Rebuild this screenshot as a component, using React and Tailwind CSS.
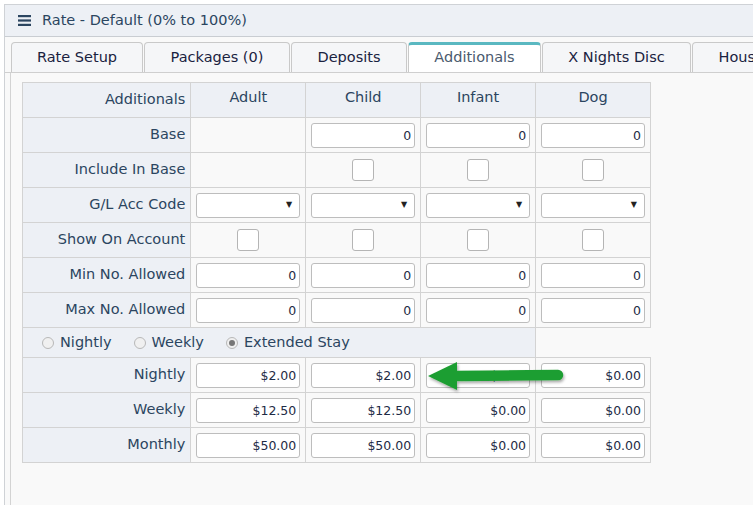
import React from 'react';

const font = { fontFamily: '"DejaVu Sans", Verdana, sans-serif' };

const tabs = [
    { label: 'Rate Setup', w: 'w-[132px]' },
    { label: 'Packages (0)', w: 'w-[146px]' },
    { label: 'Deposits', w: 'w-[116px]' },
    { label: 'Additionals', w: 'w-[133px]', active: true },
    { label: 'X Nights Disc', w: 'w-[149px]' },
    { label: 'Housekeeping', w: 'w-[156px]' },
];

const cols = ['Adult', 'Child', 'Infant', 'Dog'];

const NumBox = ({ value }) => (
    <div className="mx-auto h-[25px] w-[104px] rounded-[3px] border border-[#bdbdbd] bg-white pr-[3px] text-right text-[12.5px] leading-[23px] text-[#1d2b45]">
        {value}
    </div>
);

const SelectBox = () => (
    <div className="mx-auto flex h-[25px] w-[104px] items-center justify-end rounded-[3px] border border-[#bdbdbd] bg-white pr-[7px] text-[8px] text-[#222]">
        ▼
    </div>
);

const Check = () => (
    <div className="mx-auto h-[22px] w-[22px] rounded-[3px] border border-[#b5b5b5] bg-white" />
);

const Radio = ({ checked, label }) => (
    <span className="flex items-center gap-[6px]">
        <span className="flex h-[12px] w-[12px] items-center justify-center rounded-full border border-[#b8b8b8] bg-[#f0f0f0]">
            {checked && <span className="h-[6px] w-[6px] rounded-full bg-[#777]" />}
        </span>
        {label}
    </span>
);

const labelCell = 'h-[35px] border border-[#d3d3d3] bg-[#edf0f5] pr-[5px] text-right text-[14.5px] font-normal text-[#2b4560]';
const dataCell = 'h-[35px] border border-[#d3d3d3] bg-[#f9f9f9] p-0 text-center';

export default function App() {
    const rows = [
        { label: 'Base', cells: [null, <NumBox value="0" />, <NumBox value="0" />, <NumBox value="0" />] },
        { label: 'Include In Base', cells: [null, <Check />, <Check />, <Check />] },
        { label: 'G/L Acc Code', cells: [<SelectBox />, <SelectBox />, <SelectBox />, <SelectBox />] },
        { label: 'Show On Account', cells: [<Check />, <Check />, <Check />, <Check />] },
        { label: 'Min No. Allowed', cells: cols.map(() => <NumBox value="0" />) },
        { label: 'Max No. Allowed', cells: cols.map(() => <NumBox value="0" />) },
    ];
    const rateRows = [
        { label: 'Nightly', vals: ['$2.00', '$2.00', '$0.00', '$0.00'] },
        { label: 'Weekly', vals: ['$12.50', '$12.50', '$0.00', '$0.00'] },
        { label: 'Monthly', vals: ['$50.00', '$50.00', '$0.00', '$0.00'] },
    ];

    return (
        <div className="relative h-[505px] w-[753px] overflow-hidden bg-white pl-[4px] pt-[4px]" style={font}>
            <div className="h-full border-l border-t border-[#cfd2d6] bg-[#f9f9f9]">
                {/* Header */}
                <div className="flex h-[32px] items-center gap-[11px] border-b border-[#c9cdd2] bg-[#edf0f5] pl-[13px] text-[14.5px] text-[#2b4560]">
                    <svg width="13" height="11" viewBox="0 0 13 11">
                        <rect x="0" y="0" width="13" height="2.2" fill="#2b4560" />
                        <rect x="0" y="4.4" width="13" height="2.2" fill="#2b4560" />
                        <rect x="0" y="8.8" width="13" height="2.2" fill="#2b4560" />
                    </svg>
                    <span>Rate - Default (0% to 100%)</span>
                </div>

                {/* Tabs */}
                <div className="mt-[5px] flex gap-[1px] border-b border-[#cfcfcf] pl-[6px]">
                    {tabs.map(t => (
                        <div
                            key={t.label}
                            className={`${t.w} h-[30px] shrink-0 overflow-hidden whitespace-nowrap rounded-t-[4px] border-x border-[#c9c9c9] text-center text-[14.5px] ${
                                t.active
                                    ? 'border-t-[3px] border-t-[#5ab8c1] bg-white leading-[25px] text-[#4a5a6e]'
                                    : 'border-t border-t-[#c9c9c9] bg-[#f5f6f8] leading-[28px] text-[#1a2240]'
                            }`}
                        >
                            {t.label}
                        </div>
                    ))}
                </div>

                {/* Panel */}
                <div className="ml-[5px] h-full border-l border-[#d3d3d3] pl-[11px] pt-[9px]">
                    <table className="border-collapse" style={{ width: 629 }}>
                        <colgroup>
                            <col style={{ width: 169 }} />
                            <col style={{ width: 115 }} />
                            <col style={{ width: 115 }} />
                            <col style={{ width: 115 }} />
                            <col style={{ width: 115 }} />
                        </colgroup>
                        <tbody>
                            <tr>
                                <th className="h-[35px] border border-[#d3d3d3] bg-[#edf0f5] pr-[5px] text-right text-[14.5px] font-normal text-[#2b4560]">Additionals</th>
                                {cols.map(c => (
                                    <th key={c} className="h-[35px] border border-[#d3d3d3] bg-[#edf0f5] pb-[4px] text-center text-[14.5px] font-normal text-[#2b4560]">
                                        {c}
                                    </th>
                                ))}
                            </tr>
                            {rows.map(r => (
                                <tr key={r.label}>
                                    <td className={labelCell}>{r.label}</td>
                                    {r.cells.map((c, i) => (
                                        <td key={i} className={dataCell}>{c}</td>
                                    ))}
                                </tr>
                            ))}
                            <tr>
                                <td colSpan={4} className="h-[30px] border border-[#d3d3d3] bg-[#edf0f5] pl-[19px] text-[14.5px] text-[#2b4560]">
                                    <div className="flex items-center gap-[22px]">
                                        <Radio label="Nightly" />
                                        <Radio label="Weekly" />
                                        <Radio label="Extended Stay" checked />
                                    </div>
                                </td>
                                <td className="border-0 bg-[#f9f9f9]" />
                            </tr>
                            {rateRows.map(r => (
                                <tr key={r.label}>
                                    <td className={labelCell}>{r.label}</td>
                                    {r.vals.map((v, i) => (
                                        <td key={i} className={dataCell}>
                                            <NumBox value={v} />
                                        </td>
                                    ))}
                                </tr>
                            ))}
                        </tbody>
                    </table>
                </div>
            </div>

            {/* Annotation arrow */}
            <svg className="pointer-events-none absolute left-[424px] top-[355px]" width="146" height="42" viewBox="0 0 146 42">
                <defs>
                    <filter id="sh" x="-10%" y="-30%" width="130%" height="170%">
                        <feDropShadow dx="1" dy="2" stdDeviation="1.5" floodColor="#000" floodOpacity="0.35" />
                    </filter>
                </defs>
                <g filter="url(#sh)">
                    <line x1="30" y1="21" x2="134" y2="20" stroke="#1f9e32" strokeWidth="10.5" strokeLinecap="round" />
                    <polygon points="4,21 33,7 33,35" fill="#1f9e32" />
                </g>
            </svg>
        </div>
    );
}
